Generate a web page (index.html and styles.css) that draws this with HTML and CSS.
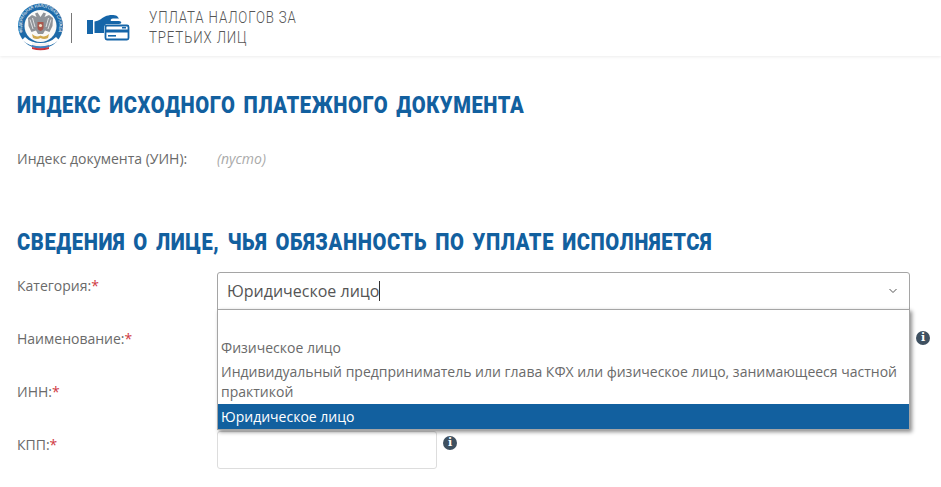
FILE: index.html
```html
<!DOCTYPE html>
<html lang="ru">
<head>
    <meta charset="UTF-8">
    <meta name="viewport" content="width=device-width, initial-scale=1.0">
    <title>Уплата налогов за третьих лиц</title>
    <link rel="stylesheet" href="styles.css">
</head>
<body>

<header class="top-bar">
    <svg class="logo-fns" width="50" height="50" viewBox="0 0 50 50">
        <circle cx="24.5" cy="24" r="22.5" fill="#1d6aa8"/>
        <circle cx="24.5" cy="24" r="16" fill="#f9f9f7"/>
        <path id="ring" d="M7.5 32 A18.8 18.8 0 1 1 41.5 32" fill="none"/>
        <text class="logo-text"><textPath href="#ring" startOffset="2" textLength="71" lengthAdjust="spacingAndGlyphs">ФЕДЕРАЛЬНАЯ НАЛОГОВАЯ СЛУЖБА</textPath></text>
        <!-- орел -->
        <path d="M24.5 15 L21.5 10.5 L19 11.5 L20.5 15 L16 13 L12 16 L12.5 24 L15.5 30 L20 28.5 L22 32 H27 L29 28.5 L33.5 30 L36.5 24 L37 16 L33 13 L28.5 15 L30 11.5 L27.5 10.5 Z" fill="#8f9398"/>
        <path d="M14 17.5 L17 27 M35 17.5 L32 27 M16.5 16 L19 25 M32.5 16 L30 25" stroke="#dfe0e2" stroke-width="1" fill="none"/>
        <path d="M21.5 20 H27.5 V25.5 Q27.5 28 24.5 29 Q21.5 28 21.5 25.5 Z" fill="#a9574c"/>
        <circle cx="24.5" cy="23.5" r="1.6" fill="#efe6cd"/>
        <path d="M16 32 Q20 36 24.5 33.5 Q29 36 33 32 L32 36 Q28 38 24.5 36 Q21 38 17 36 Z" fill="#d0a94f"/>
        <!-- лента и флаг -->
        <path d="M9 35 Q15 41 24.5 41 Q34 41 40 35 L43 38 Q35 45 24.5 45 Q14 45 6 38 Z" fill="#fff"/>
        <path d="M16 40.5 Q24.5 43 33 40.5 V43 Q24.5 45.5 16 43 Z" fill="#f2f2f2"/>
        <path d="M16 43 Q24.5 45.5 33 43 V45 Q24.5 47.5 16 45 Z" fill="#3f7fc0"/>
        <path d="M16 45 Q24.5 47.5 33 45 V47 Q24.5 49.5 16 47 Z" fill="#c9343c"/>
    </svg>
    <span class="logo-divider"></span>
    <svg class="logo-pay" width="44" height="27" viewBox="0 0 44 27">
        <rect x="1" y="6" width="6" height="14" fill="#1565a8"/>
        <path d="M8.5 7.5 C13 7 16 4 19 2.5 C23 0.5 28 0.5 31 2 L33 4.5 H27 C25 4.5 24 6 25 7 H33 C36 7 36 10 33 10 H22 C19 10 18 12 18 15 V19 H8.5 Z" fill="#1565a8"/>
        <rect x="19.5" y="11.5" width="23" height="14" rx="1.5" fill="#fff" stroke="#1565a8" stroke-width="1.8"/>
        <rect x="19.5" y="15.5" width="23" height="3" fill="#1565a8"/>
        <rect x="22" y="21" width="8" height="1.6" fill="#1565a8"/>
        <rect x="36" y="13" width="4" height="1.5" fill="#1565a8"/>
    </svg>
    <div class="service-title">УПЛАТА НАЛОГОВ ЗА<br>ТРЕТЬИХ ЛИЦ</div>
</header>

<main class="page">
    <h2 class="section-title">Индекс исходного платежного документа</h2>
    <div class="info-row">
        <span class="field-label">Индекс документа (УИН):</span>
        <span class="empty-value">(пусто)</span>
    </div>

    <h2 class="section-title section-second">Сведения о лице, чья обязанность по уплате исполняется</h2>

    <div class="form-row">
        <label class="field-label">Категория:<span class="req">*</span></label>
        <div class="select-wrap">
            <div class="select-box">
                <span>Юридическое лицо</span><span class="caret"></span>
                <svg class="chevron" width="10" height="6" viewBox="0 0 10 6"><path d="M1.5 1 L5 4.5 L8.5 1" fill="none" stroke="#555" stroke-width="1"/></svg>
            </div>
            <ul class="dropdown">
                <li class="blank"></li>
                <li class="first">Физическое лицо</li>
                <li>Индивидуальный предприниматель или глава КФХ или физическое лицо, занимающееся частной практикой</li>
                <li class="selected">Юридическое лицо</li>
            </ul>
        </div>
    </div>
    <div class="form-row">
        <label class="field-label">Наименование:<span class="req">*</span></label>
        <div class="text-input wide"></div>
        <span class="info-icon">i</span>
    </div>
    <div class="form-row">
        <label class="field-label">ИНН:<span class="req">*</span></label>
        <div class="text-input"></div>
    </div>
    <div class="form-row">
        <label class="field-label">КПП:<span class="req">*</span></label>
        <div class="text-input"></div>
        <span class="info-icon">i</span>
    </div>
</main>

</body>
</html>
```

FILE: styles.css
```css
html, body {
    margin: 0;
    padding: 0;
    height: 487px;
    overflow: hidden;
}
body {
    font-family: "Open Sans", sans-serif;
    font-size: 14px;
    color: #6a6a6a;
    background-color: #fff;
}
.top-bar {
    display: flex;
    align-items: center;
    height: 56px;
    padding-left: 16px;
    background-color: #fff;
    box-shadow: 0 1px 3px rgba(0, 0, 0, 0.08);
}
.logo-fns {
    margin-top: -2px;
}
.logo-text {
    font-family: "Liberation Sans", sans-serif;
    font-size: 4.6px;
    fill: #fff;
}
.logo-divider {
    width: 1px;
    height: 30px;
    margin: 0 14px 0 5px;
    background-color: #777;
}
.logo-pay {
    margin-top: -1px;
}
.service-title {
    margin: -2px 0 0 19px;
    font-family: Roboto, sans-serif;
    font-size: 17px;
    font-weight: 300;
    line-height: 20px;
    letter-spacing: 1.1px;
    color: #555;
    white-space: nowrap;
    transform: scaleX(0.78);
    transform-origin: left center;
}
.page {
    padding: 0 11px 0 17px;
}
.section-title {
    margin: 35px 0 0;
    font-family: Roboto, sans-serif;
    font-size: 24px;
    line-height: 28px;
    font-weight: 900;
    letter-spacing: 0.7px;
    word-spacing: 3px;
    text-transform: uppercase;
    color: #12609f;
    white-space: nowrap;
    transform: scaleX(0.84);
    transform-origin: left center;
}
.section-second {
    margin-top: 60px;
    margin-bottom: 16px;
}
.info-row {
    display: flex;
    margin-top: 30px;
    line-height: 19px;
}
.field-label {
    width: 200px;
    flex-shrink: 0;
}
.req {
    color: #d0393f;
}
.empty-value {
    font-style: italic;
    color: #aaa;
}
.form-row {
    display: flex;
    align-items: flex-start;
    height: 53px;
}
.form-row .field-label {
    line-height: 19px;
    padding-top: 4px;
}
.select-wrap {
    position: relative;
    width: 693px;
}
.select-box {
    display: flex;
    align-items: center;
    height: 36px;
    padding-left: 9px;
    border: 1px solid #a5a5a5;
    border-radius: 3px 3px 0 0;
    font-size: 16px;
    color: #555;
}
.caret {
    width: 1px;
    height: 20px;
    background-color: #333;
}
.chevron {
    margin-left: auto;
    margin-right: 11px;
}
.dropdown {
    position: absolute;
    z-index: 5;
    top: 37px;
    left: 0;
    right: 0;
    margin: 0;
    padding: 0;
    list-style: none;
    background-color: #fff;
    border: 1px solid #a5a5a5;
    box-shadow: 2px 2px 4px rgba(0, 0, 0, 0.45);
    line-height: 20px;
}
.dropdown li {
    padding: 2.5px 3px;
}
.dropdown .blank {
    height: 24px;
    padding: 0;
}
.dropdown .first {
    padding-top: 3.5px;
    padding-bottom: 1.5px;
}
.dropdown .selected {
    background-color: #12609f;
    color: #fff;
}
.text-input {
    width: 218px;
    height: 36px;
    border: 1px solid #ddd;
    border-radius: 3px;
    background-color: #fff;
}
.text-input.wide {
    width: 691px;
}
.info-icon {
    display: block;
    width: 14px;
    height: 14px;
    margin: 5px 0 0 6px;
    border-radius: 50%;
    background-color: #3e5060;
    color: #fff;
    font-family: "DejaVu Serif", serif;
    font-size: 11px;
    font-weight: bold;
    line-height: 14px;
    text-align: center;
}
.wide + .info-icon {
    margin-top: 6px;
}
```
